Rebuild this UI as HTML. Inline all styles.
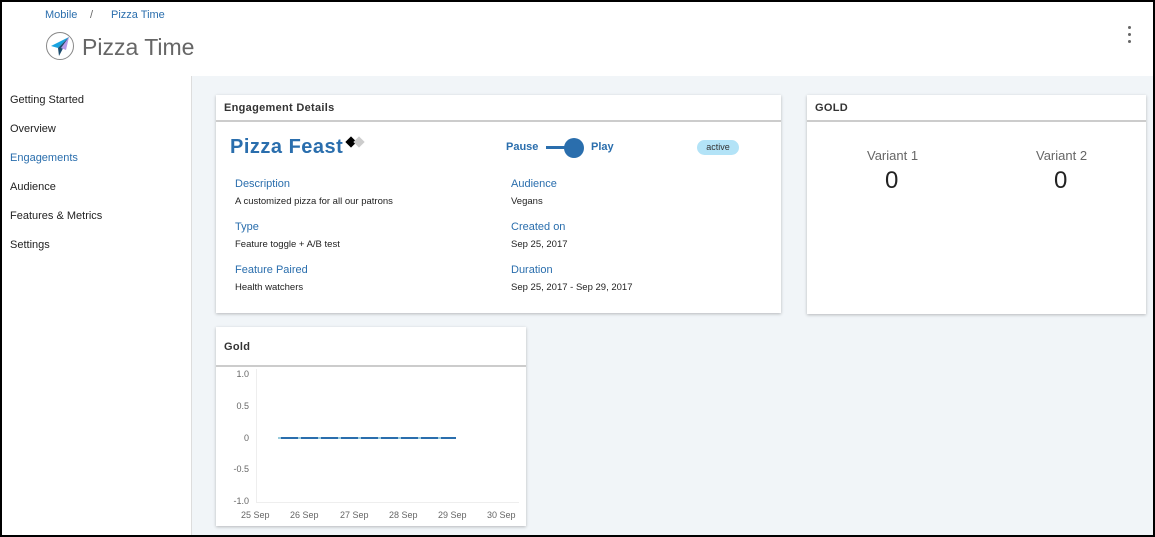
<!DOCTYPE html><html><head><style>
*{box-sizing:border-box;margin:0;padding:0}
body{width:1155px;height:537px;overflow:hidden;font-family:"Liberation Sans",Arial,sans-serif;background:#fff;position:relative}
.frame{position:absolute;inset:0;border:2px solid #000;pointer-events:none;z-index:10}
.a{position:absolute}
.blue{color:#2a6ead}
.card{position:absolute;background:#fff;box-shadow:0 1px 3px rgba(0,0,0,.25)}
.ch{height:27px;border-bottom:2px solid #ccc;font-size:11px;font-weight:bold;color:#333;padding:7px 0 0 8px;letter-spacing:.3px}
.lbl{position:absolute;font-size:11px;color:#2a6ead}
.val{position:absolute;font-size:9.5px;color:#222}
.nav{position:absolute;left:10px;font-size:11px;color:#222}
.yl{position:absolute;font-size:9px;color:#666;text-align:right;width:30px}
.xl{position:absolute;font-size:9px;color:#666}
</style></head><body>
<div class="frame"></div>
<div class="a blue" style="left:45px;top:9px;font-size:11px">Mobile</div>
<div class="a" style="left:90px;top:9px;font-size:11px;color:#666">/</div>
<div class="a blue" style="left:111px;top:9px;font-size:11px">Pizza Time</div>
<svg class="a" style="left:45px;top:31px" width="30" height="30" viewBox="0 0 30 30"><circle cx="15" cy="15" r="13.5" fill="#fff" stroke="#888" stroke-width="1"/><path d="M24 6 L6 15 L13 17 Z" fill="#19a3e0"/><path d="M24 6 L13 17 L14 25 Z" fill="#1d4d6e"/><path d="M24 6 L16 17 L21 19 Z" fill="#b79ae8"/></svg>
<div class="a" style="left:82px;top:34px;font-size:23px;color:#666">Pizza Time</div>
<div class="a" style="left:1128px;top:26px;width:4px"><div style="width:3px;height:3px;background:#666;border-radius:50%;margin-bottom:4px"></div><div style="width:3px;height:3px;background:#666;border-radius:50%;margin-bottom:4px"></div><div style="width:3px;height:3px;background:#666;border-radius:50%"></div></div>
<div class="a" style="left:191px;top:76px;width:964px;height:461px;background:#f1f5f8;border-left:1px solid #ddd"></div>
<div class="nav" style="top:94px">Getting Started</div>
<div class="nav" style="top:123px">Overview</div>
<div class="nav" style="top:152px;color:#2a6ead">Engagements</div>
<div class="nav" style="top:181px">Audience</div>
<div class="nav" style="top:210px">Features &amp; Metrics</div>
<div class="nav" style="top:239px">Settings</div>

<div class="card" style="left:216px;top:95px;width:565px;height:218px">
<div class="ch">Engagement Details</div>
<div class="a" style="left:14px;top:41px;font-size:20px;font-weight:bold;color:#2a6ead;letter-spacing:.5px">Pizza Feast</div>
<div class="a" style="left:131px;top:43px;width:8px;height:8px;background:#000;transform:rotate(45deg)"></div>
<div class="a" style="left:139px;top:43px;width:8px;height:8px;background:#ccc;transform:rotate(45deg)"></div>
<div class="a" style="left:290px;top:46px;font-size:11px;font-weight:bold;color:#2a6ead">Pause</div>
<div class="a" style="left:330px;top:51px;width:25px;height:3px;background:#2a6ead"></div>
<div class="a" style="left:348px;top:43px;width:20px;height:20px;border-radius:50%;background:#2a6ead"></div>
<div class="a" style="left:375px;top:46px;font-size:11px;font-weight:bold;color:#2a6ead">Play</div>
<div class="a" style="left:481px;top:45px;width:42px;height:15px;border-radius:8px;background:#b3e3f7;font-size:9px;color:#333;text-align:center;line-height:15px">active</div>
<div class="lbl" style="left:19px;top:83px">Description</div><div class="val" style="left:19px;top:101px">A customized pizza for all our patrons</div>
<div class="lbl" style="left:19px;top:126px">Type</div><div class="val" style="left:19px;top:144px">Feature toggle + A/B test</div>
<div class="lbl" style="left:19px;top:169px">Feature Paired</div><div class="val" style="left:19px;top:187px">Health watchers</div>
<div class="lbl" style="left:295px;top:83px">Audience</div><div class="val" style="left:295px;top:101px">Vegans</div>
<div class="lbl" style="left:295px;top:126px">Created on</div><div class="val" style="left:295px;top:144px">Sep 25, 2017</div>
<div class="lbl" style="left:295px;top:169px">Duration</div><div class="val" style="left:295px;top:187px">Sep 25, 2017 - Sep 29, 2017</div>
</div>

<div class="card" style="left:807px;top:95px;width:339px;height:219px">
<div class="ch">GOLD</div>
<div class="a" style="left:60px;top:53px;font-size:13px;color:#666">Variant 1</div>
<div class="a" style="left:78px;top:72px;font-size:24px;color:#222">0</div>
<div class="a" style="left:229px;top:53px;font-size:13px;color:#666">Variant 2</div>
<div class="a" style="left:247px;top:72px;font-size:24px;color:#222">0</div>
</div>

<div class="card" style="left:216px;top:327px;width:310px;height:199px">
<div class="ch" style="height:40px;padding-top:14px">Gold</div>
<div class="yl" style="left:3px;top:42px">1.0</div>
<div class="yl" style="left:3px;top:74px">0.5</div>
<div class="yl" style="left:3px;top:106px">0</div>
<div class="yl" style="left:3px;top:137px">-0.5</div>
<div class="yl" style="left:3px;top:169px">-1.0</div>
<div class="a" style="left:40px;top:42px;width:1px;height:134px;background:#eee"></div>
<div class="a" style="left:40px;top:175px;width:263px;height:1px;background:#eee"></div>
<div class="a" style="left:62px;top:110px;width:178px;height:2px;background:repeating-linear-gradient(90deg,#9cd 0 3px,#2a6ead 3px 20px)"></div>
<div class="xl" style="left:25px;top:183px">25 Sep</div>
<div class="xl" style="left:74px;top:183px">26 Sep</div>
<div class="xl" style="left:124px;top:183px">27 Sep</div>
<div class="xl" style="left:173px;top:183px">28 Sep</div>
<div class="xl" style="left:222px;top:183px">29 Sep</div>
<div class="xl" style="left:271px;top:183px">30 Sep</div>
</div>
</body></html>
